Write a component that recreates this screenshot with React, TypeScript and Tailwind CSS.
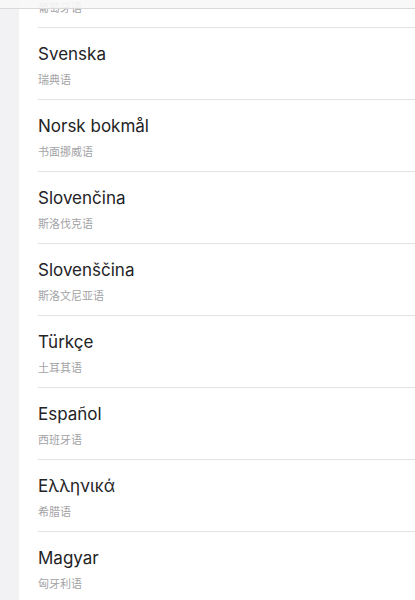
import React from 'react';

interface Language {
  name: string;
  local: string;
}

const languages: Language[] = [
  { name: 'Português', local: '葡萄牙语' },
  { name: 'Svenska', local: '瑞典语' },
  { name: 'Norsk bokmål', local: '书面挪威语' },
  { name: 'Slovenčina', local: '斯洛伐克语' },
  { name: 'Slovenščina', local: '斯洛文尼亚语' },
  { name: 'Türkçe', local: '土耳其语' },
  { name: 'Español', local: '西班牙语' },
  { name: 'Ελληνικά', local: '希腊语' },
  { name: 'Magyar', local: '匈牙利语' },
];

export default function App() {
  return (
    <div
      className="relative w-[415px] h-[600px] overflow-hidden bg-[#f2f2f5] flex"
      style={{ fontFamily: 'Inter, "Noto Sans CJK SC", sans-serif' }}
    >
      {/* header bar sitting over the scrolled list */}
      <div className="absolute top-0 left-0 right-0 h-[9px] bg-[#f7f7f7]/90 border-b border-[#d9d9d9] z-10" />

      <div className="w-[19px] flex-shrink-0" />
      <div className="flex-1 bg-white">
        <div className="-mt-[44px] pl-[19px]">
          {languages.map((lang) => (
            <div
              key={lang.name}
              className="h-[72px] border-b border-[#e2e2e4] pt-[15px] flex flex-col"
            >
              <div className="text-[17px] leading-[22px] text-[#232325]">{lang.name}</div>
              <div className="mt-[8px] text-[11px] leading-[15px] text-[#a3a3a6]">{lang.local}</div>
            </div>
          ))}
        </div>
      </div>
    </div>
  );
}
